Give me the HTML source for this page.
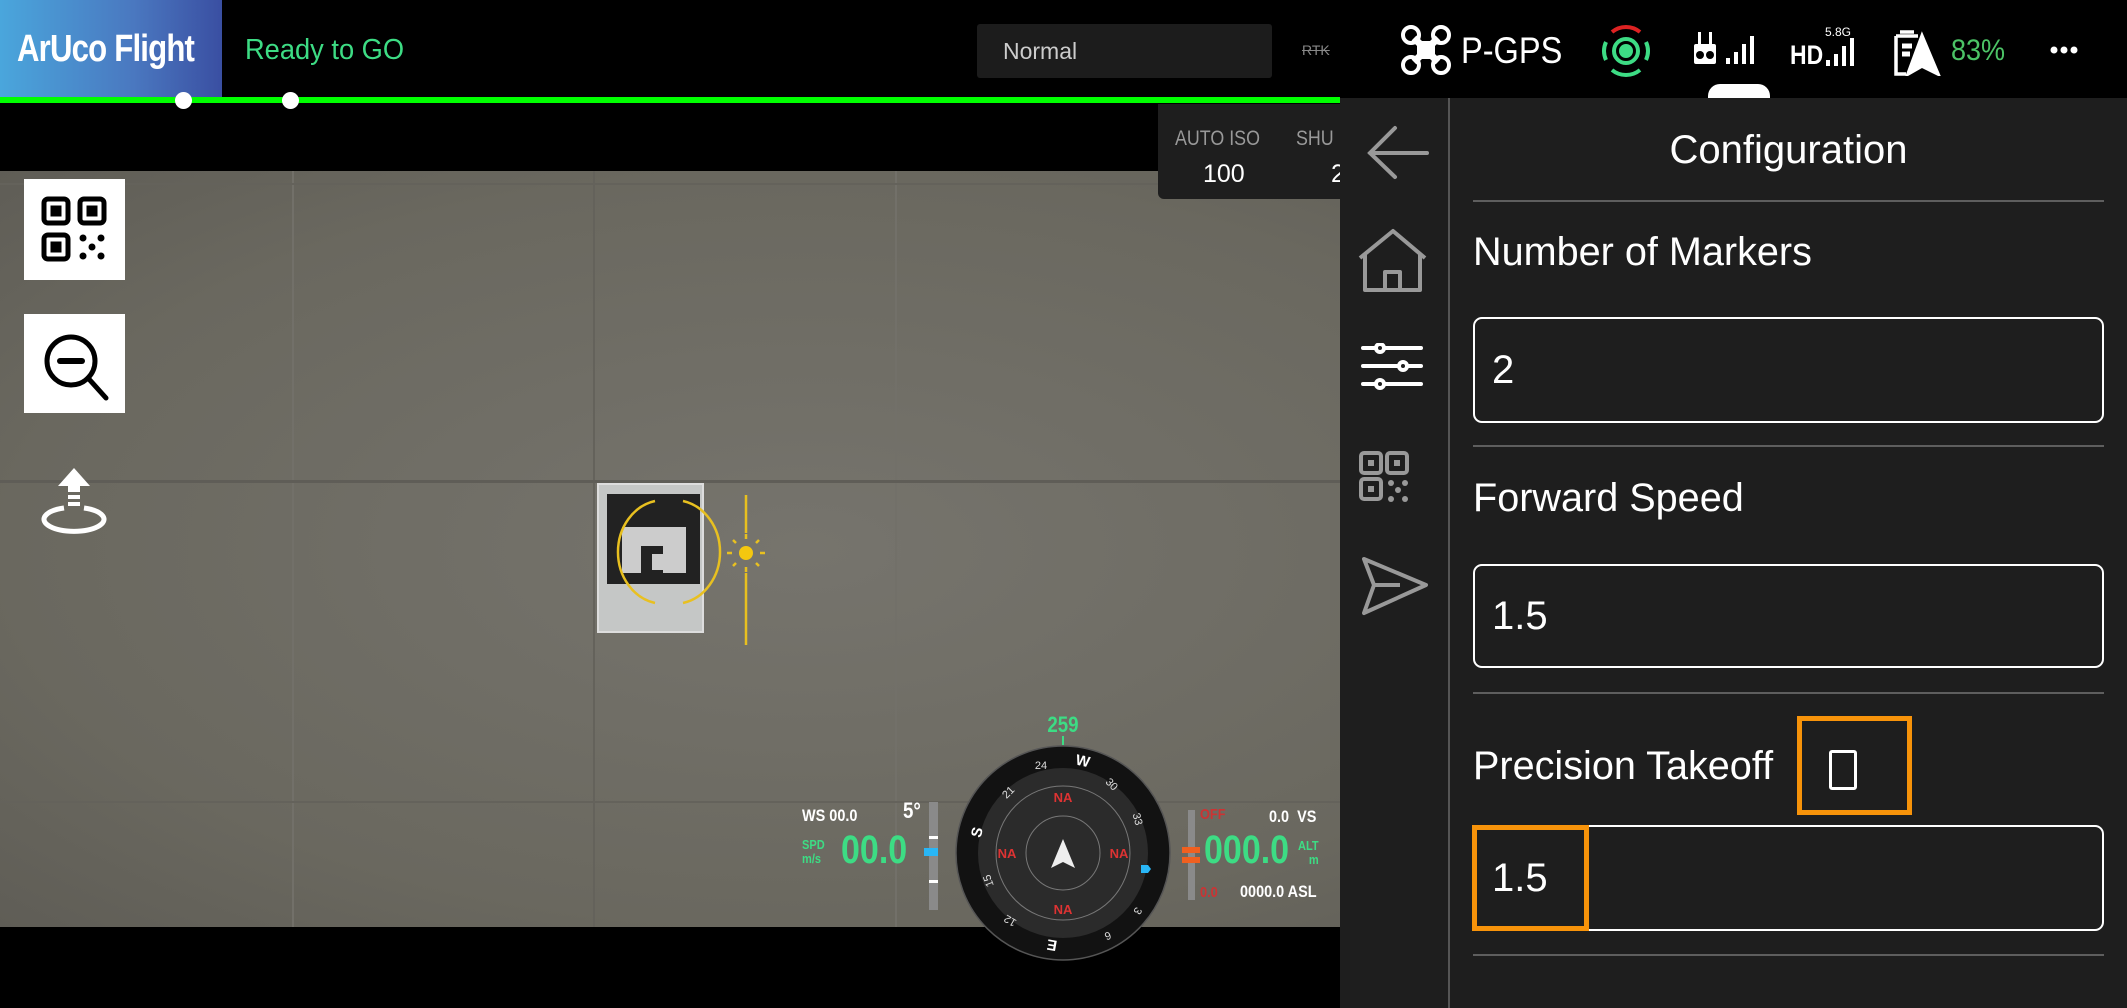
<!DOCTYPE html>
<html><head><meta charset="utf-8"><style>
*{margin:0;padding:0;box-sizing:border-box}
body{width:2127px;height:1008px;background:#000;position:relative;overflow:hidden;font-family:"Liberation Sans",sans-serif}
.a{position:absolute}
.lbl{position:absolute;left:1473px;font-size:40px;color:#fff;line-height:1;transform:scaleX(.99);transform-origin:left}
.inp{position:absolute;left:1473px;width:631px;border:2px solid #fff;border-radius:9px;font-size:40px;color:#fff;padding-left:17px;display:flex;align-items:center}
.sep{position:absolute;left:1473px;width:631px;height:2px;background:#5e5e5e}
.hud{font-weight:bold;transform:scaleX(.85);transform-origin:left}
</style></head><body>
<div class="a" style="left:0;top:0;width:222px;height:98px;background:linear-gradient(90deg,#4aa6dc,#4a78c0 60%,#3a4fa2)"></div>
<div class="a hud" style="left:17px;top:28px;font-size:38px;color:#fff;letter-spacing:-1px;transform:scaleX(.82)">ArUco Flight</div>
<div class="a" style="left:245px;top:34px;font-size:29px;color:#3ddc84;transform:scaleX(.94);transform-origin:left">Ready to GO</div>
<div class="a" style="left:977px;top:24px;width:295px;height:54px;background:#1c1c1c;border-radius:3px"></div>
<div class="a" style="left:1003px;top:38px;font-size:23px;color:#ccc">Normal</div>
<div class="a" style="left:1302px;top:42px;font-size:14px;color:#888;text-decoration:line-through">RTK</div>
<svg class="a" style="left:1400px;top:24px" width="52" height="52" viewBox="0 0 52 52" fill="none" stroke="#fff" stroke-width="4"><circle cx="11" cy="11" r="8"/><circle cx="41" cy="11" r="8"/><circle cx="11" cy="41" r="8"/><circle cx="41" cy="41" r="8"/><path d="M14 14L38 38M38 14L14 38" stroke-width="7"/><rect x="19" y="19" width="14" height="14" fill="#fff"/></svg>
<div class="a" style="left:1461px;top:30px;font-size:37px;color:#fff;transform:scaleX(.88);transform-origin:left">P-GPS</div>
<svg class="a" style="left:1598px;top:22px" width="56" height="58" viewBox="0 0 56 58" fill="none" stroke-width="4"><path d="M14 10A22 22 0 0 1 42 10" stroke="#d22"/><path d="M8 20A22 22 0 0 0 8 38M48 20A22 22 0 0 1 48 38M14 48A22 22 0 0 0 42 48" stroke="#3ddc84"/><circle cx="28" cy="29" r="12" stroke="#3ddc84"/><circle cx="28" cy="29" r="7" fill="#3ddc84" stroke="none"/></svg>
<svg class="a" style="left:1694px;top:30px" width="70" height="36" viewBox="0 0 70 36" fill="#fff"><rect x="0" y="14" width="22" height="20" rx="2"/><rect x="4" y="2" width="3" height="12"/><rect x="15" y="2" width="3" height="12"/><circle cx="6" cy="25" r="4" fill="#000"/><circle cx="16" cy="25" r="4" fill="#000"/><rect x="32" y="28" width="4" height="6"/><rect x="40" y="22" width="4" height="12"/><rect x="48" y="14" width="4" height="20"/><rect x="56" y="6" width="4" height="28"/></svg>
<div class="a hud" style="left:1790px;top:40px;font-size:27px;color:#fff">HD</div>
<div class="a" style="left:1825px;top:25px;font-size:12px;color:#fff">5.8G</div>
<svg class="a" style="left:1826px;top:38px" width="34" height="28" viewBox="0 0 34 28" fill="#fff"><rect x="0" y="22" width="4" height="6"/><rect x="8" y="16" width="4" height="12"/><rect x="16" y="8" width="4" height="20"/><rect x="24" y="0" width="4" height="28"/></svg>
<svg class="a" style="left:1892px;top:26px" width="50" height="50" viewBox="0 0 50 50" fill="none" stroke="#fff" stroke-width="3.5"><path d="M8 6h14M4 10h22M4 10v38h10"/><path d="M10 20h10M10 28h8" stroke-width="5"/><path d="M16 48L30 10L46 48L30 40Z" fill="#fff"/></svg>
<div class="a" style="left:1951px;top:34px;font-size:30px;color:#4cc366;transform:scaleX(.9);transform-origin:left">83%</div>
<svg class="a" style="left:2050px;top:44px" width="28" height="12" viewBox="0 0 28 12" fill="#fff"><circle cx="4" cy="6" r="3.5"/><circle cx="14" cy="6" r="3.5"/><circle cx="24" cy="6" r="3.5"/></svg>
<div class="a" style="left:0;top:97px;width:1340px;height:6px;background:#0f0"></div>
<div class="a" style="left:175px;top:92px;width:17px;height:17px;border-radius:50%;background:#fff"></div>
<div class="a" style="left:282px;top:92px;width:17px;height:17px;border-radius:50%;background:#fff"></div>
<div class="a" style="left:0;top:171px;width:1340px;height:756px;background:radial-gradient(ellipse at 60% 50%,#76746d,#6a685f 70%,#5f5d56);overflow:hidden">
 <div class="a" style="left:292px;top:0;width:2px;height:756px;background:#727069"></div>
 <div class="a" style="left:593px;top:0;width:2px;height:756px;background:#64625b"></div>
 <div class="a" style="left:895px;top:0;width:2px;height:756px;background:#727069"></div>
 <div class="a" style="left:0;top:12px;width:1340px;height:2px;background:#64625b"></div>
 <div class="a" style="left:0;top:309px;width:1340px;height:3px;background:#5f5d57"></div>
 <div class="a" style="left:0;top:630px;width:1340px;height:2px;background:#64625b"></div>
</div>
<div class="a" style="left:1158px;top:104px;width:182px;height:95px;background:#1e1e1e;border-radius:0 0 0 6px"></div>
<div class="a" style="left:1175px;top:127px;font-size:21px;color:#999;transform:scaleX(.85);transform-origin:left">AUTO ISO</div>
<div class="a" style="left:1296px;top:127px;font-size:21px;color:#999;transform:scaleX(.85);transform-origin:left">SHU</div>
<div class="a" style="left:1203px;top:160px;font-size:25px;color:#fff">100</div>
<div class="a" style="left:1331px;top:160px;font-size:25px;color:#fff">2</div>
<div class="a" style="left:24px;top:179px;width:101px;height:101px;background:#fff"></div>
<svg class="a" style="left:40px;top:195px" width="70" height="70" viewBox="0 0 70 70" fill="none" stroke="#000" stroke-width="5"><rect x="4" y="4" width="24" height="24" rx="4"/><rect x="40" y="4" width="24" height="24" rx="4"/><rect x="4" y="40" width="24" height="24" rx="4"/><rect x="13" y="13" width="6" height="6" fill="#000"/><rect x="49" y="13" width="6" height="6" fill="#000"/><rect x="13" y="49" width="6" height="6" fill="#000"/><g fill="#000" stroke="none"><circle cx="43" cy="43" r="3.5"/><circle cx="61" cy="43" r="3.5"/><circle cx="52" cy="52" r="3.5"/><circle cx="43" cy="61" r="3.5"/><circle cx="61" cy="61" r="3.5"/></g></svg>
<div class="a" style="left:24px;top:314px;width:101px;height:99px;background:#fff"></div>
<svg class="a" style="left:36px;top:326px" width="80" height="80" viewBox="0 0 80 80" fill="none" stroke="#000" stroke-width="5" stroke-linecap="round"><circle cx="35" cy="35" r="24"/><path d="M24 35h22" stroke-width="6"/><path d="M52 52L70 72"/></svg>
<svg class="a" style="left:36px;top:464px" width="76" height="72" viewBox="0 0 76 72" fill="#fff"><path d="M38 4L22 22h10v6h12v-6h10z"/><rect x="32" y="31" width="12" height="4"/><rect x="32" y="38" width="12" height="4"/><path d="M28 44A30 12 0 1 0 48 44" fill="none" stroke="#fff" stroke-width="5"/></svg>
<div class="a" style="left:597px;top:483px;width:107px;height:150px;background:#c5c7c6;border:2px solid #ddd"></div>
<div class="a" style="left:607px;top:494px;width:93px;height:90px;background:#222"></div>
<div class="a" style="left:622px;top:527px;width:64px;height:46px;background:#ccc"></div>
<div class="a" style="left:641px;top:546px;width:22px;height:30px;background:#222"></div>
<div class="a" style="left:652px;top:554px;width:12px;height:16px;background:#ccc"></div>
<svg class="a" style="left:610px;top:495px" width="160" height="160" viewBox="0 0 160 160" fill="none" stroke="#e8c020" stroke-width="2.5"><path d="M45 6A46 52 0 0 0 45 108M73 6A46 52 0 0 1 73 108"/><path d="M136 -44V38M136 78V150"/><circle cx="136" cy="58" r="7" fill="#f4c70f" stroke="none"/><path d="M136 44v-5M136 72v5M122 58h-5M150 58h5M126 48l-3-3M146 48l3-3M126 68l-3 3M146 68l3 3"/></svg>
<svg class="a" style="left:940px;top:700px" width="250" height="270" viewBox="0 0 250 270">
<circle cx="123" cy="153" r="107" fill="#121212" stroke="#555" stroke-width="1.5"/>
<circle cx="123" cy="153" r="85" fill="#2b2b2b"/>
<circle cx="123" cy="153" r="67" fill="none" stroke="#777" stroke-width="1"/>
<circle cx="123" cy="153" r="37" fill="none" stroke="#777" stroke-width="1"/>
<path d="M123 139L111 168L123 162L135 168Z" fill="#eee"/>
<text x="123" y="32" fill="#3ddc84" font-size="22" font-weight="bold" text-anchor="middle" font-family="Liberation Sans" transform="translate(123 0) scale(.85 1) translate(-123 0)">259</text>
<path d="M123 36v9" stroke="#3ddc84" stroke-width="2"/>
<g fill="#d33" font-size="13" font-weight="bold" text-anchor="middle" font-family="Liberation Sans"><text x="123" y="102">NA</text><text x="123" y="214">NA</text><text x="67" y="158">NA</text><text x="179" y="158">NA</text></g>
<g fill="#fff" font-size="15" font-weight="bold" text-anchor="middle" font-family="Liberation Sans"><text x="143" y="66" transform="rotate(12 143 60)">W</text><text x="36" y="138" transform="rotate(-75 36 132)">S</text><text x="112" y="250" transform="rotate(190 112 245)">E</text></g>
<g fill="#ddd" font-size="11" text-anchor="middle" font-family="Liberation Sans"><text x="101" y="69">24</text><text x="68" y="96" transform="rotate(-45 68 92)">21</text><text x="172" y="88" transform="rotate(45 172 84)">30</text><text x="198" y="123" transform="rotate(75 198 119)">33</text><text x="198" y="215" transform="rotate(120 198 211)">3</text><text x="168" y="240" transform="rotate(160 168 236)">6</text><text x="70" y="225" transform="rotate(-150 70 221)">12</text><text x="48" y="185" transform="rotate(-110 48 181)">15</text></g>
<path d="M201 165h7l3 4-3 4h-7z" fill="#29b6f6"/>
</svg>
<div class="a hud" style="left:802px;top:806px;font-size:17px;color:#fff">WS 00.0</div>
<div class="a hud" style="left:903px;top:798px;font-size:22px;color:#fff">5°</div>
<div class="a hud" style="left:802px;top:838px;font-size:13px;color:#3ddc84;line-height:14px">SPD<br>m/s</div>
<div class="a hud" style="left:841px;top:828px;font-size:40px;color:#3ddc84">00.0</div>
<div class="a" style="left:929px;top:802px;width:9px;height:108px;background:#8a8a8a"></div>
<div class="a" style="left:929px;top:836px;width:9px;height:3px;background:#fff"></div>
<div class="a" style="left:929px;top:880px;width:9px;height:3px;background:#fff"></div>
<div class="a" style="left:924px;top:848px;width:14px;height:8px;background:#29b6f6"></div>
<div class="a" style="left:1188px;top:810px;width:7px;height:90px;background:#8a8a8a"></div>
<div class="a" style="left:1182px;top:847px;width:18px;height:6px;background:#f06020"></div>
<div class="a" style="left:1182px;top:857px;width:18px;height:6px;background:#f06020"></div>
<div class="a hud" style="left:1200px;top:806px;font-size:15px;color:#c33">OFF</div>
<div class="a hud" style="left:1269px;top:807px;font-size:17px;color:#fff">0.0&nbsp;&nbsp;VS</div>
<div class="a hud" style="left:1204px;top:828px;font-size:40px;color:#3ddc84">000.0</div>
<div class="a hud" style="left:1298px;top:839px;font-size:13px;color:#3ddc84;line-height:14px;text-align:right">ALT<br>&nbsp;&nbsp;m</div>
<div class="a hud" style="left:1200px;top:884px;font-size:15px;color:#c33">0.0</div>
<div class="a hud" style="left:1240px;top:882px;font-size:17px;color:#fff">0000.0 ASL</div>
<div class="a" style="left:1708px;top:84px;width:62px;height:20px;background:#fff;border-radius:12px 12px 0 0"></div>
<div class="a" style="left:1340px;top:98px;width:787px;height:910px;background:#1e1e1e"></div>
<div class="a" style="left:1448px;top:98px;width:2px;height:910px;background:#555"></div>
<svg class="a" style="left:1355px;top:125px" width="80" height="55" viewBox="0 0 80 55" fill="none" stroke="#999" stroke-width="4" stroke-linecap="round"><path d="M40 3L15 28L40 52M15 28H72"/></svg>
<svg class="a" style="left:1355px;top:228px" width="80" height="65" viewBox="0 0 80 65" fill="none" stroke="#999" stroke-width="4" stroke-linejoin="round"><path d="M5 30L38 3L70 30M10 26V62H65V26M30 62V44H45V62"/></svg>
<svg class="a" style="left:1355px;top:343px" width="80" height="50" viewBox="0 0 80 50" fill="none" stroke="#fff" stroke-width="4" stroke-linecap="round"><path d="M8 5H66M8 23H66M8 41H66"/><circle cx="25" cy="5" r="4" fill="#1e1e1e"/><circle cx="48" cy="23" r="4" fill="#1e1e1e"/><circle cx="25" cy="41" r="4" fill="#1e1e1e"/></svg>
<svg class="a" style="left:1357px;top:449px" width="60" height="58" viewBox="0 0 60 58" fill="none" stroke="#999" stroke-width="4"><rect x="4" y="4" width="20" height="20" rx="3"/><rect x="30" y="4" width="20" height="20" rx="3"/><rect x="4" y="30" width="20" height="20" rx="3"/><g fill="#999" stroke="none"><rect x="11" y="11" width="6" height="6"/><rect x="37" y="11" width="6" height="6"/><rect x="11" y="37" width="6" height="6"/><circle cx="34" cy="34" r="3"/><circle cx="48" cy="34" r="3"/><circle cx="41" cy="41" r="3"/><circle cx="34" cy="50" r="3"/><circle cx="48" cy="50" r="3"/></g></svg>
<svg class="a" style="left:1360px;top:555px" width="70" height="62" viewBox="0 0 70 62" fill="none" stroke="#999" stroke-width="4" stroke-linejoin="round"><path d="M4 4L66 30L4 58L14 30Z M14 30H40"/></svg>
<div class="a" style="left:1450px;top:128px;width:677px;text-align:center;font-size:40px;color:#fff">Configuration</div>
<div class="sep" style="top:200px"></div>
<div class="lbl" style="top:232px">Number of Markers</div>
<div class="inp" style="top:317px;height:106px">2</div>
<div class="sep" style="top:445px"></div>
<div class="lbl" style="top:478px">Forward Speed</div>
<div class="inp" style="top:564px;height:104px">1.5</div>
<div class="sep" style="top:692px"></div>
<div class="lbl" style="top:746px">Precision Takeoff</div>
<div class="a" style="left:1797px;top:716px;width:115px;height:99px;border:5px solid #f7930a"></div>
<div class="a" style="left:1829px;top:750px;width:28px;height:40px;border:3px solid #fff;border-radius:3px"></div>
<div class="inp" style="top:825px;height:106px">1.5</div>
<div class="a" style="left:1472px;top:825px;width:117px;height:106px;border:5px solid #f7930a"></div>
<div class="sep" style="top:954px"></div>
</body></html>
